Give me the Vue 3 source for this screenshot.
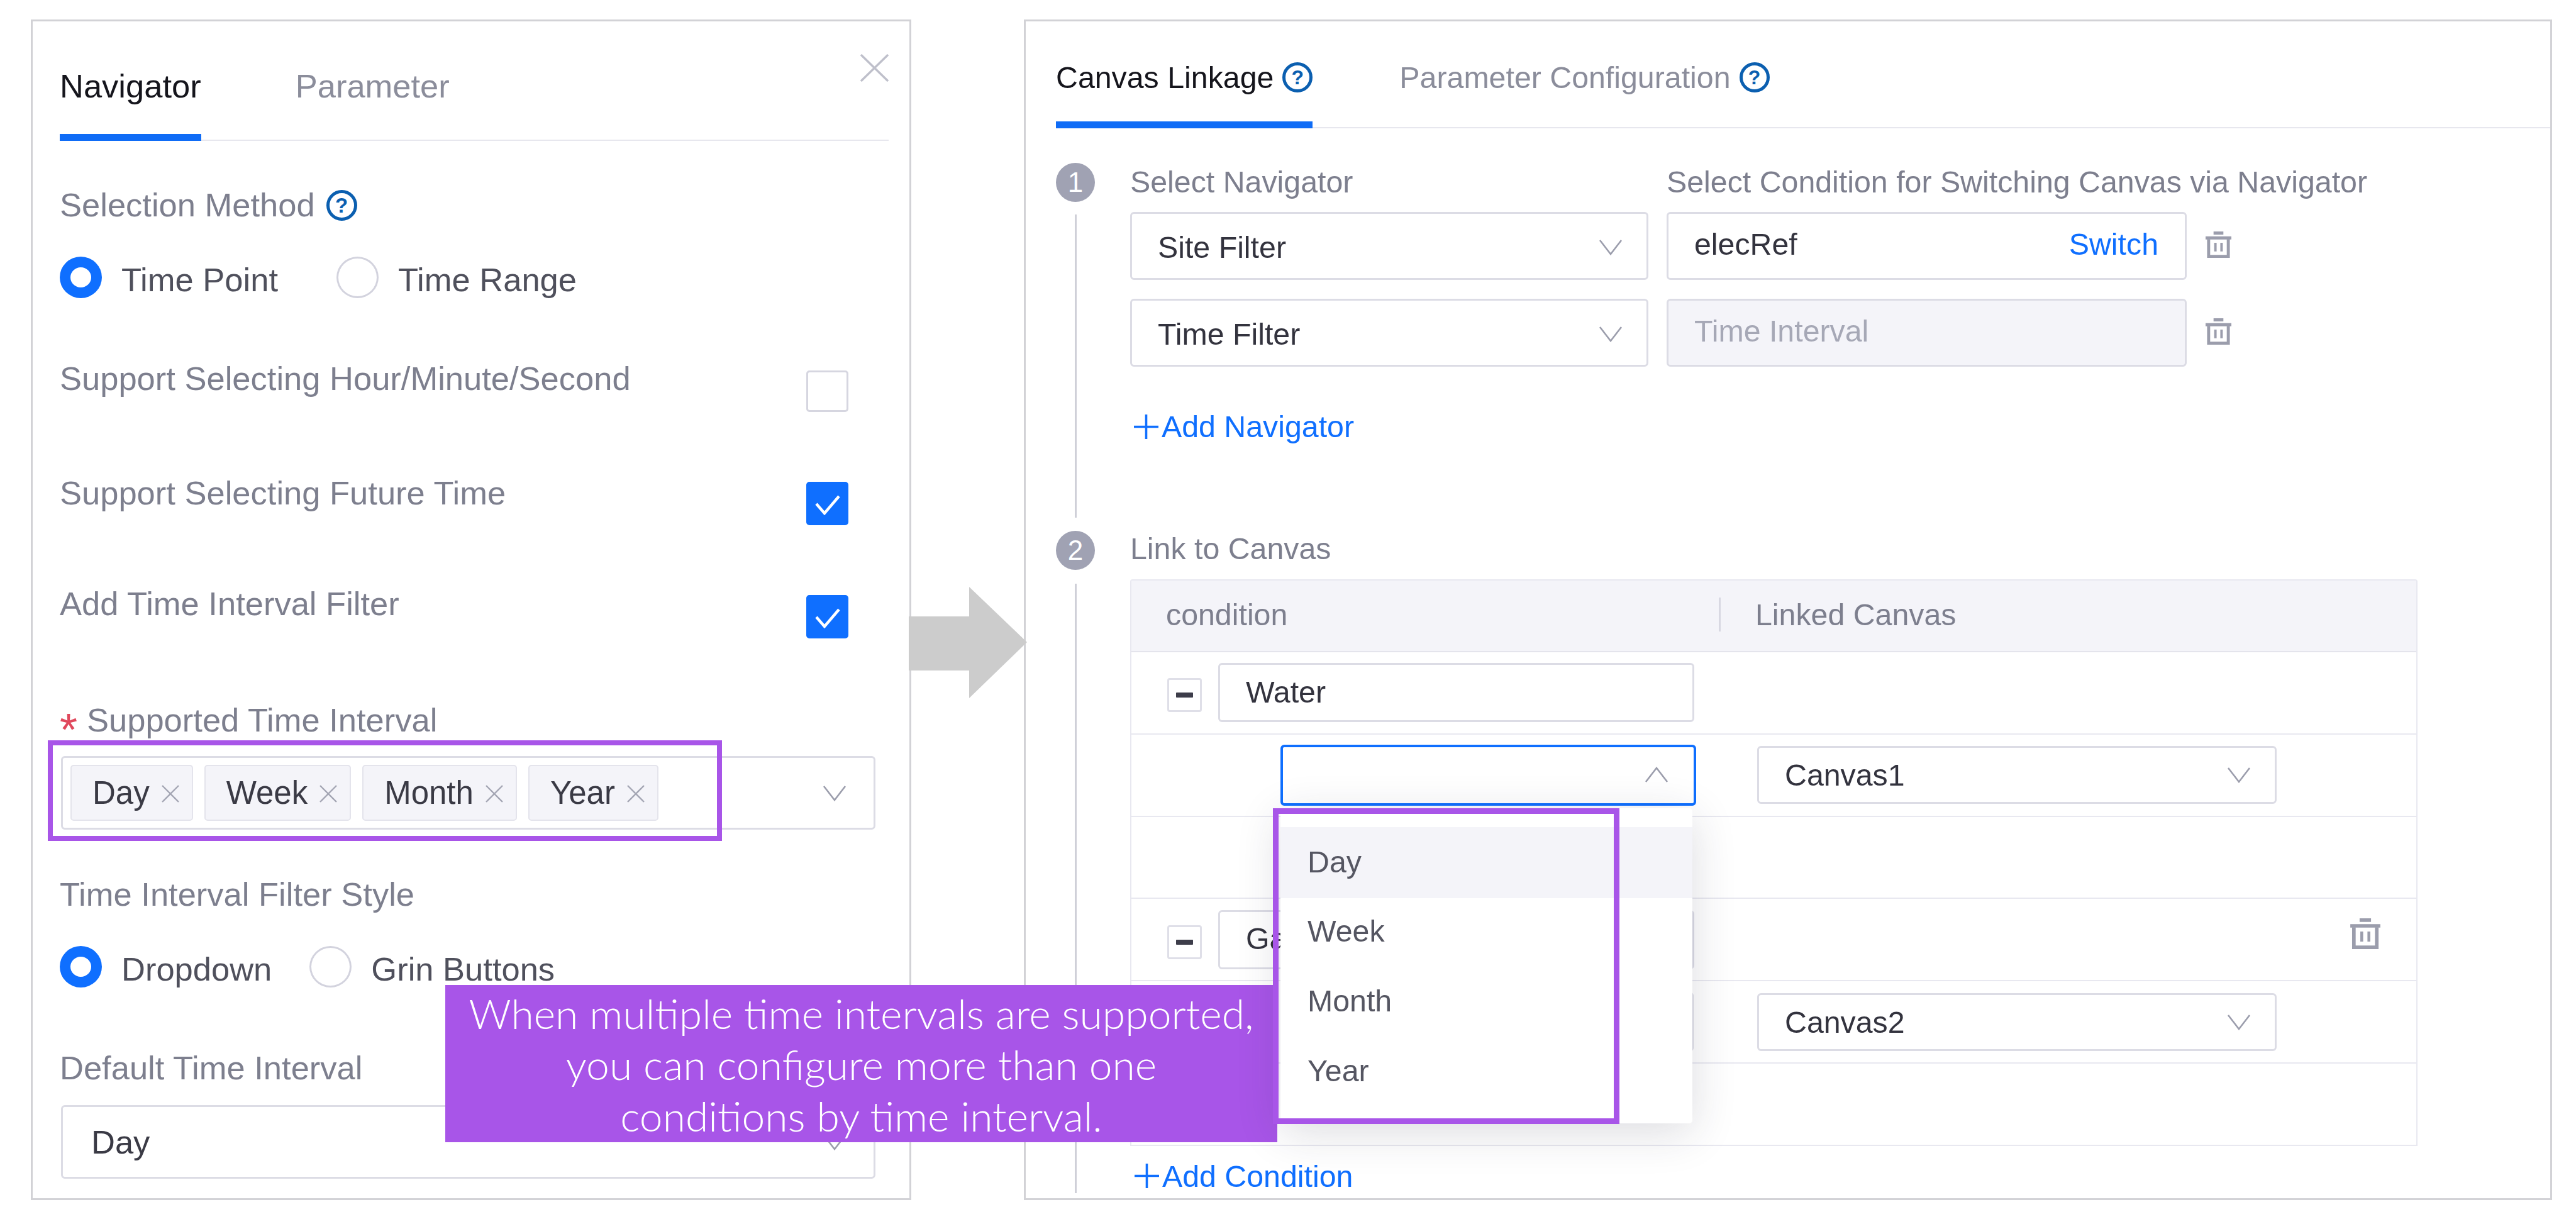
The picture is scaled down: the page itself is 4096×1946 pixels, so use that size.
<script setup>
const tags = ['Day', 'Week', 'Month', 'Year']
const options = ['Day', 'Week', 'Month', 'Year']
</script>

<template>
  <div class="page">
    <svg class="defs" width="0" height="0" aria-hidden="true">
      <symbol id="chev" viewBox="0 0 38 26"><path d="M2 2 L19 24 L36 2" fill="none" stroke="#9b9dac" stroke-width="2.6" /></symbol>
      <symbol id="trash" viewBox="0 0 44 44">
        <path d="M14 3 H30 M1 11 H43" fill="none" stroke="#9b9dac" stroke-width="5" />
        <path d="M6 13 V41 H38 V13" fill="none" stroke="#9b9dac" stroke-width="5" />
        <path d="M17 19 V33 M27 19 V33" fill="none" stroke="#9b9dac" stroke-width="4" />
      </symbol>
      <symbol id="tick" viewBox="0 0 40 32"><path d="M2 14 L15 29 L38 2" fill="none" stroke="#fff" stroke-width="4.4" /></symbol>
      <symbol id="cross" viewBox="0 0 30 30"><path d="M2 2 L28 28 M28 2 L2 28" fill="none" stroke="#a3a5b3" stroke-width="2.4" /></symbol>
      <symbol id="plus" viewBox="0 0 39 39"><path d="M0 19.5 H39 M19.5 0 V39" fill="none" stroke="#0f6fff" stroke-width="3.6" /></symbol>
    </svg>

    <section class="panel left">
      <svg class="close" viewBox="0 0 45 44"><path d="M1 1 L44 43 M44 1 L1 43" fill="none" stroke="#bfc0cb" stroke-width="3.4" /></svg>
      <div class="tabs left-tabs">
        <div class="tab active">Navigator</div>
        <div class="tab">Parameter</div>
      </div>

      <div class="label m72">Selection Method <span class="help">?</span></div>
      <div class="radios m52">
        <span class="radio on"></span><span class="radio-text">Time Point</span>
        <span class="radio r1"></span><span class="radio-text">Time Range</span>
      </div>

      <div class="check-row row1">
        <span class="label">Support Selecting Hour/Minute/Second</span>
        <span class="check"></span>
      </div>
      <div class="check-row row2">
        <span class="label">Support Selecting Future Time</span>
        <span class="check on"><svg class="tick"><use href="#tick" /></svg></span>
      </div>
      <div class="check-row row3">
        <span class="label">Add Time Interval Filter</span>
        <span class="check on"><svg class="tick"><use href="#tick" /></svg></span>
      </div>

      <div class="label m100"><span class="star">*</span>Supported Time Interval</div>
      <div class="multi">
        <div v-for="t in tags" :key="t" class="tag">
          {{ t }}<svg class="cross"><use href="#cross" /></svg>
        </div>
        <svg class="chev multi-chev"><use href="#chev" /></svg>
        <div class="mark mark-tags"></div>
      </div>

      <div class="label m73">Time Interval Filter Style</div>
      <div class="radios m52">
        <span class="radio on"></span><span class="radio-text">Dropdown</span>
        <span class="radio r2"></span><span class="radio-text">Grin Buttons</span>
      </div>

      <div class="label m98">Default Time Interval</div>
      <div class="plain-select">
        Day
        <svg class="chev multi-chev"><use href="#chev" /></svg>
      </div>
    </section>

    <section class="panel right">
      <div class="tabs right-tabs">
        <div class="tab active">Canvas Linkage <span class="help small">?</span></div>
        <div class="tab">Parameter Configuration <span class="help small">?</span></div>
      </div>

      <div class="step step-one">
        <div class="rail">
          <span class="num">1</span>
          <span class="rail-line first"></span>
        </div>
        <div class="step-body">
          <div class="nav-labels">
            <span class="rlabel nav-col">Select Navigator</span>
            <span class="rlabel">Select Condition for Switching Canvas via Navigator</span>
          </div>
          <div class="nav-row r-first">
            <div class="field nav-col">Site Filter<svg class="chev"><use href="#chev" /></svg></div>
            <div class="field cond"><span class="lift">elecRef</span><span class="link lift">Switch</span></div>
            <svg class="trash"><use href="#trash" /></svg>
          </div>
          <div class="nav-row r-second">
            <div class="field nav-col">Time Filter<svg class="chev"><use href="#chev" /></svg></div>
            <div class="field cond disabled"><span class="lift">Time Interval</span></div>
            <svg class="trash"><use href="#trash" /></svg>
          </div>
          <div class="add add-nav"><svg class="plus"><use href="#plus" /></svg>Add Navigator</div>
        </div>
      </div>

      <div class="step step-two">
        <div class="rail">
          <span class="num">2</span>
          <span class="rail-line second"></span>
        </div>
        <div class="step-body">
          <div class="rlabel link-title">Link to Canvas</div>
          <div class="table">
            <div class="thead">
              <span class="th-cond">condition</span>
              <span class="th-sep"></span>
              <span>Linked Canvas</span>
            </div>
            <div class="tr">
              <span class="expander"><i></i></span>
              <div class="field group">Water</div>
            </div>
            <div class="tr">
              <div class="sub focus">
                <svg class="chev up"><use href="#chev" /></svg>
                <div class="dropdown">
                  <div v-for="(o, i) in options" :key="o" class="option" :class="{ hover: i === 0 }">{{ o }}</div>
                  <div class="mark mark-drop"></div>
                </div>
              </div>
              <div class="field linked">Canvas1<svg class="chev"><use href="#chev" /></svg></div>
            </div>
            <div class="tr"></div>
            <div class="tr">
              <span class="expander"><i></i></span>
              <div class="field group">Gas</div>
              <svg class="trash big"><use href="#trash" /></svg>
            </div>
            <div class="tr">
              <div class="sub"></div>
              <div class="field linked">Canvas2<svg class="chev"><use href="#chev" /></svg></div>
            </div>
            <div class="tr"></div>
          </div>
          <div class="add add-cond"><svg class="plus"><use href="#plus" /></svg>Add Condition</div>
        </div>
      </div>
    </section>

    <svg class="arrow" viewBox="0 0 188 177"><path d="M0 47 H96 V0 L188 88 L96 177 V133 H0 Z" fill="#cccccc" /></svg>

    <div class="note">
      <span>When multiple time intervals are supported,</span>
      <span>you can configure more than one</span>
      <span>conditions by time interval.</span>
    </div>
  </div>
</template>

<style scoped>
.page {
  position: relative;
  width: 4096px;
  height: 1946px;
  overflow: hidden;
  background: #fff;
  display: flex;
  align-items: flex-start;
  padding: 31px 0 0 49px;
  box-sizing: border-box;
  font-family: "Liberation Sans", Arial, sans-serif;
  color: #2f2f3a;
}
.defs { position: absolute; }
.panel {
  position: relative;
  box-sizing: border-box;
  height: 1877px;
  border: 3px solid #d2d2d6;
  background: #fff;
}
.left {
  width: 1400px;
  padding: 0 33px 0 43px;
  font-size: 52.5px;
}
.right {
  width: 2430px;
  margin-left: 179px;
  font-size: 48.3px;
}
.close { position: absolute; top: 52px; right: 33px; width: 45px; height: 44px; }

.tabs { display: flex; border-bottom: 2px solid #e7e7ee; box-sizing: border-box; }
.tab {
  line-height: 60px;
  color: #8b8d9b;
  border-bottom: 11px solid transparent;
  margin-bottom: -2px;
  white-space: nowrap;
  display: flex;
  align-items: center;
  gap: 14px;
}
.tab.active { color: #15151c; border-bottom-color: #0f6cf6; }
.left-tabs { margin-top: 73px; gap: 150px; }
.left-tabs .tab { padding-bottom: 46px; }
.right-tabs { margin: 59px 0 0 48px; gap: 138px; }
.right-tabs .tab { padding-bottom: 40px; }

.help {
  display: inline-flex;
  align-items: center;
  justify-content: center;
  box-sizing: border-box;
  width: 49px;
  height: 49px;
  border: 5px solid #0b5fb0;
  border-radius: 50%;
  color: #0b5fb0;
  font-size: 33px;
  font-weight: 700;
  line-height: 1;
}
.help.small { width: 48px; height: 48px; font-size: 32px; }

.label { line-height: 60px; color: #7d7f8e; white-space: nowrap; }
div.label { display: flex; align-items: center; height: 60px; }
div.label .help { margin-left: 18px; }
.m72 { margin-top: 72px; }
.m52 { margin-top: 52px; }
.m100 { margin-top: 100px; }
.m73 { margin-top: 73px; }
.m98 { margin-top: 98px; }

.radios { display: flex; height: 66px; align-items: center; }
.radio {
  box-sizing: border-box;
  width: 67px;
  height: 66px;
  flex: none;
  border: 3px solid #d3d3de;
  border-radius: 50%;
}
.radio.on { border: 17px solid #0f6fff; }
.radio.r1 { margin-left: 93px; }
.radio.r2 { margin-left: 60px; }
.radio-text { margin-left: 31px; padding-top: 6px; color: #4f505c; white-space: nowrap; }

.check-row { display: flex; justify-content: space-between; padding-right: 64px; }
.row1 { margin-top: 98px; height: 82px; }
.row2 { margin-top: 100px; height: 81px; }
.row3 { margin-top: 95px; height: 85px; }
.check {
  box-sizing: border-box;
  width: 67px;
  height: 66px;
  border: 3px solid #d6d6e0;
  border-radius: 5px;
  display: flex;
  align-items: center;
  justify-content: center;
}
.row1 .check { margin-top: 17px; }
.row2 .check { margin-top: 12px; height: 69px; }
.row3 .check { margin-top: 16px; height: 69px; }
.check.on { background: #0f6fff; border-color: #0f6fff; }
.tick { width: 40px; height: 32px; margin-top: 4px; }

.star {
  display: block;
  width: 43px;
  flex: none;
  color: #e0485c;
  font-size: 72px;
  line-height: 72px;
  height: 72px;
  margin-top: 30px;
}

.multi, .plain-select {
  position: relative;
  box-sizing: border-box;
  width: 1295px;
  height: 117px;
  margin-left: 2px;
  border: 3px solid #dcdce5;
  border-radius: 6px;
  display: flex;
  align-items: center;
}
.multi { margin-top: 27px; padding-left: 12px; gap: 18px; }
.plain-select { margin-top: 29px; padding-left: 45px; color: #3a3a45; }
.tag {
  box-sizing: border-box;
  height: 89px;
  padding: 0 19px 0 33px;
  display: flex;
  align-items: center;
  background: #f4f4f9;
  border: 2px solid #e4e4ec;
  border-radius: 5px;
  color: #3a3a45;
  font-size: 51px;
}
.cross { width: 30px; height: 30px; margin-left: 18px; margin-top: 2px; }
.chev { width: 38px; height: 26px; flex: none; margin-left: auto; margin-right: 38px; }
.multi-chev { margin-right: 43px; }
.chev.up { transform: rotate(180deg); margin-right: 40px; }

.mark {
  position: absolute;
  box-sizing: border-box;
  border: 8px solid #a855e8;
  z-index: 12;
  pointer-events: none;
}
.mark-tags { left: -24px; top: -28px; width: 1072px; height: 160px; }
.mark-drop { left: -12px; top: 0; width: 551px; height: 502px; border-width: 9px; }

.step { display: flex; margin-left: 48px; }
.step-one { margin-top: 55px; height: 585px; }
.step-two { height: 1053px; }
.rail { width: 62px; display: flex; flex-direction: column; align-items: center; margin-right: 57px; flex: none; }
.num {
  width: 62px;
  height: 62px;
  flex: none;
  border-radius: 50%;
  background: #a0a2b3;
  color: #fff;
  font-size: 44px;
  line-height: 62px;
  text-align: center;
}
.rail-line { width: 3px; flex: 1; background: #cfd0d8; }
.rail-line.first { margin: 20px 0 21px; }
.rail-line.second { margin-top: 22px; }
.step-body { min-width: 0; margin-left: -1px; }
.rlabel { line-height: 60px; color: #7d7f8e; white-space: nowrap; }
.link-title { line-height: 57px; margin-bottom: 20px; }

.nav-labels { display: flex; gap: 29px; }
.nav-col { width: 824px; flex: none; }
.nav-row { display: flex; align-items: center; gap: 29px; }
.r-first { margin-top: 18px; }
.r-second { margin-top: 30px; }
.field {
  box-sizing: border-box;
  height: 108px;
  padding-left: 41px;
  padding-top: 3px;
  border: 3px solid #dcdce5;
  border-radius: 6px;
  display: flex;
  align-items: center;
  color: #33333e;
  background: #fff;
  white-space: nowrap;
}
.cond { width: 827px; }
.disabled { background: #f4f4f9; color: #a6a8b6; }
.lift { margin-top: -9px; }
.link { margin-left: auto; margin-right: 42px; color: #0f6fff; }
.trash { width: 43px; height: 44px; margin-left: 0; margin-top: -4px; flex: none; }

.add { line-height: 60px; color: #0f6fff; display: flex; align-items: center; white-space: nowrap; }
.add-nav { margin-top: 65px; margin-left: 6px; }
.add-cond { margin-top: 18px; margin-left: 7px; }
.plus { width: 39px; height: 39px; margin-right: 5px; flex: none; }

.table {
  width: 2047px;
  box-sizing: border-box;
  border: 2px solid #e8e8f0;
  border-bottom: 0;
  border-radius: 4px 4px 0 0;
}
.thead {
  height: 108px;
  padding-bottom: 4px;
  background: #f4f4f9;
  border-bottom: 2px solid #e4e4ec;
  box-sizing: content-box;
  display: flex;
  align-items: center;
  color: #7d7f8e;
}
.th-cond { width: 879px; margin-left: 55px; }
.th-sep { width: 3px; height: 54px; background: #d8d8e2; margin-right: 55px; }
.tr {
  box-sizing: border-box;
  height: 130.8px;
  border-bottom: 2px solid #e8e8f0;
  display: flex;
  align-items: center;
  position: relative;
}
.expander {
  box-sizing: border-box;
  width: 55px;
  height: 54px;
  margin-left: 57px;
  margin-top: 8px;
  border: 3px solid #dfdfe8;
  border-radius: 4px;
  display: flex;
  align-items: center;
  justify-content: center;
  flex: none;
}
.expander i { display: block; width: 27px; height: 8px; background: #3d3d4a; border-radius: 1px; }
.field.group { width: 757px; height: 94px; margin-left: 26px; padding-top: 0; padding-bottom: 3px; }
.sub {
  position: relative;
  box-sizing: border-box;
  width: 657px;
  height: 95px;
  margin-left: 237px;
  border: 3px solid #dcdce5;
  border-radius: 6px;
  display: flex;
  align-items: center;
  flex: none;
}
.sub.focus { width: 661px; height: 97px; border: 4px solid #0f6fff; }
.field.linked { width: 826px; height: 92px; margin-left: 101px; padding-top: 0; }
.focus + .linked { margin-left: 97px; }
.trash.big { width: 50px; height: 51px; margin: -18px 56px 0 auto; }
.dropdown {
  position: absolute;
  left: -4px;
  top: 97px;
  box-sizing: border-box;
  width: 655px;
  height: 501px;
  padding-top: 30px;
  background: #fff;
  border-radius: 5px;
  box-shadow: 0 14px 70px rgba(40, 40, 60, 0.16);
  z-index: 10;
  color: #555662;
}
.option { height: 111px; padding: 0 0 6px 43px; box-sizing: border-box; display: flex; align-items: center; }
.option.hover { height: 113px; background: #f4f4f9; padding-bottom: 2px; }

.arrow { position: absolute; left: 1445px; top: 933px; width: 188px; height: 177px; z-index: 3; }

.note {
  position: absolute;
  left: 708px;
  top: 1566px;
  box-sizing: border-box;
  width: 1323px;
  height: 250px;
  padding-top: 2px;
  background: #a855e8;
  color: #fff;
  z-index: 5;
  display: flex;
  flex-direction: column;
  align-items: center;
  justify-content: center;
  font-family: Lato, "Noto Sans", sans-serif;
  font-weight: 300;
  font-size: 66px;
  line-height: 81.5px;
  white-space: nowrap;
}
</style>

<style>
html, body { margin: 0; padding: 0; background: #fff; }
</style>
